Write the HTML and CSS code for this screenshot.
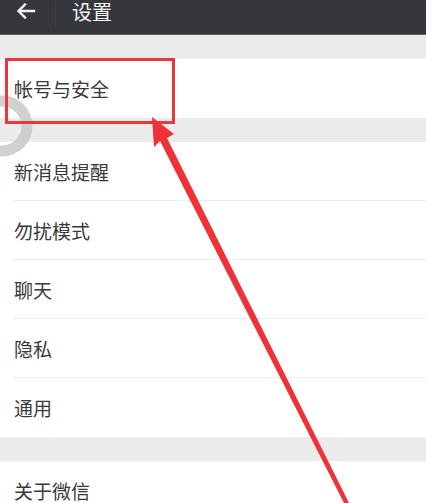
FILE: index.html
```html
<!DOCTYPE html>
<html lang="zh-CN">
<head>
    <meta charset="UTF-8">
    <meta name="viewport" content="width=device-width, initial-scale=1.0">
    <title>设置</title>
    <link rel="stylesheet" href="styles.css">
</head>
<body>
    <div class="page">
        <header class="topbar">
            <span class="back">
                <svg width="20" height="16" viewBox="0 0 20 16">
                    <path d="M18 8H3M9 1.5L2.5 8 9 14.5" fill="none" stroke="#f2f2f2" stroke-width="2.4" stroke-linecap="square"/>
                </svg>
            </span>
            <span class="divider"></span>
            <span class="title">设置</span>
        </header>

        <div class="gap"></div>
        <div class="group">
            <div class="item">帐号与安全</div>
        </div>

        <div class="gap"></div>
        <div class="group">
            <div class="item">新消息提醒</div>
            <div class="item">勿扰模式</div>
            <div class="item">聊天</div>
            <div class="item">隐私</div>
            <div class="item">通用</div>
        </div>

        <div class="gap"></div>
        <div class="group">
            <div class="item">关于微信</div>
        </div>

        <!-- annotation drawn over the screenshot -->
        <svg class="overlay" width="426" height="503" viewBox="0 0 426 503">
            <circle cx="2" cy="126" r="25" fill="none" stroke="#c9c9c9" stroke-width="11" opacity="0.85"/>
            <rect x="6.5" y="59.5" width="167" height="63" fill="none" stroke="#e8383c" stroke-width="3"/>
            <polygon points="152,117 174,134 167,138 349,503 344,503 160,141 154,147" fill="#ee3237"/>
        </svg>
    </div>
</body>
</html>
```

FILE: styles.css
```css
body {
    margin: 0;
    font-family: "Noto Sans CJK SC", "Noto Sans", sans-serif;
    color: #3a3a3a;
    background: #ebebeb;
    overflow: hidden;
}
.page {
    position: relative;
    width: 426px;
    height: 503px;
    overflow: hidden;
    background: #ebebeb;
}
.topbar {
    display: flex;
    align-items: flex-start;
    height: 33px;
    padding-top: 1px;
    background: #36373c;
    border-bottom: 1px solid #62636a;
}
.back {
    display: flex;
    width: 20px;
    margin: 2px 0 0 16px;
}
.divider {
    width: 1px;
    height: 26px;
    margin: 0 16px 0 19px;
    background: #404146;
}
.title {
    color: #f4f4f4;
    font-size: 20px;
    line-height: 22px;
}
.gap {
    height: 24px;
}
.group {
    background: #fff;
}
.item {
    display: flex;
    align-items: center;
    height: 59px;
    margin-left: 14px;
    font-size: 19px;
    border-bottom: 1px solid #ececec;
    box-sizing: border-box;
}
.item:last-child {
    border-bottom: none;
}
.overlay {
    position: absolute;
    left: 0;
    top: 0;
}
```
